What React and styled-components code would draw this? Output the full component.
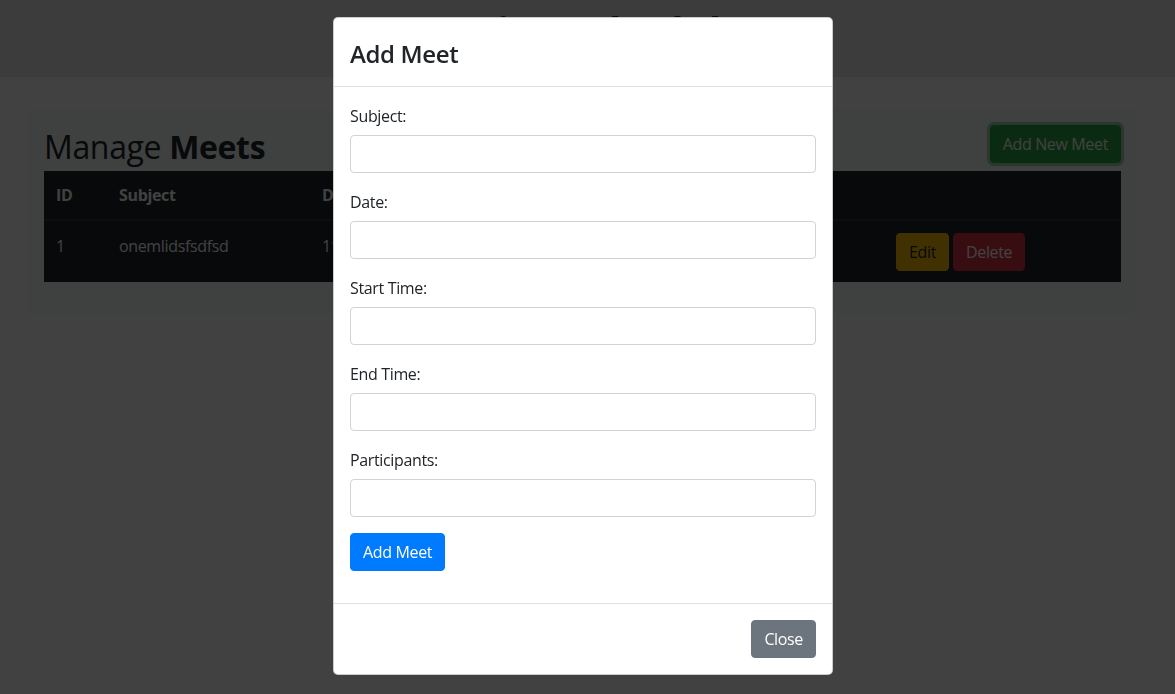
import React from 'react';
import styled, { createGlobalStyle } from 'styled-components';

const GlobalStyle = createGlobalStyle`
  * { box-sizing: border-box; }
  body {
    margin: 0;
    background: #fff;
    color: #212529;
    font-family: 'Open Sans', 'Noto Sans', sans-serif;
    font-size: 16px;
    line-height: 1.5;
    letter-spacing: -0.35px;
  }
`;

const meets = [
  { id: 1, subject: 'onemlidsfsdfsd', date: '11/04/2023', start: '10:00', end: '11:00', participants: 'john, mary' },
];

const fields = ['Subject:', 'Date:', 'Start Time:', 'End Time:', 'Participants:'];

const Page = styled.div`
  min-height: 694px;
`;

const Jumbo = styled.header`
  height: 77px;
  background: #e9ecef;
  padding-top: 7px;
  padding-right: 17px;
  text-align: center;

  h1 {
    margin: 0;
    font-size: 40px;
    font-weight: 700;
    line-height: 1.2;
  }
`;

const Card = styled.section`
  margin: 32px 38px 0 28px;
  padding: 16px;
  background: #f8f9fa;
  border-radius: 5px;
`;

const TopRow = styled.div`
  display: flex;
  justify-content: space-between;
  align-items: flex-start;
  margin-bottom: 8px;

  h2 {
    margin: 0;
    padding-top: 3px;
    height: 38px;
    font-size: 32px;
    font-weight: 400;
    line-height: 38px;
  }
`;

const Button = styled.button`
  font-family: inherit;
  font-size: 16px;
  letter-spacing: -0.35px;
  line-height: 24px;
  height: 38px;
  padding: 6px 12px;
  border: 1px solid ${(p) => p.$bg};
  border-radius: 4px;
  background: ${(p) => p.$bg};
  color: ${(p) => p.$fg || '#fff'};
  box-shadow: ${(p) => (p.$ring ? `0 0 0 3px ${p.$ring}` : 'none')};
  cursor: pointer;
`;

const Table = styled.table`
  width: 100%;
  border-collapse: collapse;
  table-layout: fixed;
  background: #212529;
  color: #fff;
  margin-bottom: 16px;

  th, td {
    padding: 12px;
    text-align: left;
    vertical-align: top;
    white-space: nowrap;
    overflow: hidden;
  }

  td {
    padding-top: 13px;
    padding-bottom: 11px;
  }

  th {
    font-weight: 700;
    border-bottom: 2px solid #32383e;
  }
`;

const Actions = styled.div`
  display: flex;
  gap: 4px;
  margin-top: -1px;
`;

const Backdrop = styled.div`
  position: fixed;
  inset: 0;
  background: rgba(0, 0, 0, 0.745);
`;

const Modal = styled.div`
  position: absolute;
  top: 17px;
  left: 333px;
  width: 500px;
  background: #fff;
  border: 1px solid rgba(0, 0, 0, 0.2);
  border-radius: 5px;
`;

const ModalHeader = styled.div`
  padding: 16px;
  border-bottom: 1px solid #dee2e6;

  h4 {
    margin: 0;
    padding-top: 2px;
    height: 36px;
    font-size: 24px;
    font-weight: 600;
    line-height: 36px;
  }
`;

const ModalBody = styled.form`
  padding: 16px;
  margin-bottom: 16px;
`;

const Group = styled.div`
  margin-bottom: 16px;

  label {
    display: block;
    margin-bottom: 8px;
    padding-top: 1px;
    height: 24px;
  }
`;

const Input = styled.input`
  display: block;
  width: 100%;
  height: 38px;
  padding: 6px 12px;
  border: 1px solid #ced4da;
  border-radius: 4px;
  font-family: inherit;
  font-size: 16px;
`;

const ModalFooter = styled.div`
  display: flex;
  justify-content: flex-end;
  padding: 12px;
  border-top: 1px solid #dee2e6;

  button {
    margin: 4px;
  }
`;

export default function App() {
  return (
    <Page>
      <GlobalStyle />
      <Jumbo>
        <h1>Meeting Scheduler</h1>
      </Jumbo>
      <Card>
        <TopRow>
          <h2>
            Manage <b>Meets</b>
          </h2>
          <Button $bg="#28a745" $ring="rgba(72,180,97,0.5)">Add New Meet</Button>
        </TopRow>
        <Table>
          <colgroup>
            <col style={{ width: 63 }} />
            <col style={{ width: 203 }} />
            <col style={{ width: 150 }} />
            <col style={{ width: 120 }} />
            <col style={{ width: 120 }} />
            <col style={{ width: 184 }} />
            <col />
          </colgroup>
          <thead>
            <tr>
              <th>ID</th>
              <th>Subject</th>
              <th>Date</th>
              <th>Start Time</th>
              <th>End Time</th>
              <th>Participants</th>
              <th />
            </tr>
          </thead>
          <tbody>
            {meets.map((m) => (
              <tr key={m.id}>
                <td>{m.id}</td>
                <td>{m.subject}</td>
                <td>{m.date}</td>
                <td>{m.start}</td>
                <td>{m.end}</td>
                <td>{m.participants}</td>
                <td>
                  <Actions>
                    <Button $bg="#ffc107" $fg="#212529">Edit</Button>
                    <Button $bg="#dc3545">Delete</Button>
                  </Actions>
                </td>
              </tr>
            ))}
          </tbody>
        </Table>
      </Card>
      <Backdrop />
      <Modal>
        <ModalHeader>
          <h4>Add Meet</h4>
        </ModalHeader>
        <ModalBody onSubmit={(e) => e.preventDefault()}>
          {fields.map((f) => (
            <Group key={f}>
              <label>{f}</label>
              <Input type="text" />
            </Group>
          ))}
          <Button $bg="#007bff" type="submit">Add Meet</Button>
        </ModalBody>
        <ModalFooter>
          <Button $bg="#6c757d" type="button">Close</Button>
        </ModalFooter>
      </Modal>
    </Page>
  );
}
